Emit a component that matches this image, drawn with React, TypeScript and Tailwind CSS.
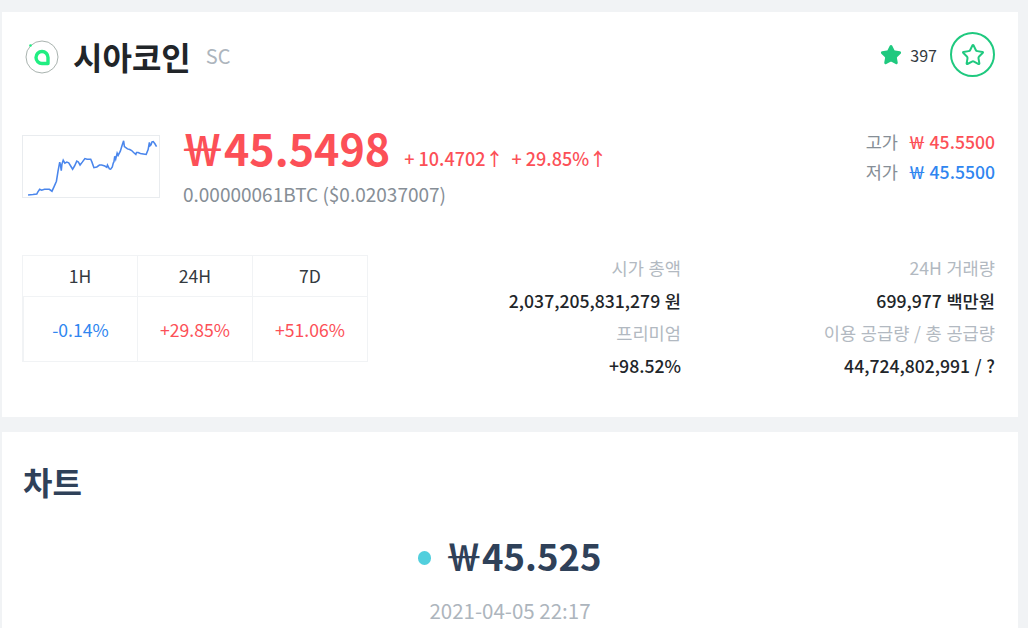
import { Star } from "lucide-react"

const font = { fontFamily: '"Noto Sans CJK KR", "Noto Sans", sans-serif' }

const sparkline =
  "4,61 9,60.5 13,60 14,58 16,55 18,56 21,55 26,55 28.7,57 31,52 33.3,46.7 35,36 36.7,27 37.5,30 38.3,35.7 39,29 40.3,25 42,28 44,27 46,27.7 48,31 50,34.3 52,31 54.3,26 56,27 57.7,30 60,27 62.7,23.3 65,24 68.7,24 70,27 72,32.7 75,32 77.7,30 80,30 83.3,31 85.3,32.3 86,30 88,34 89.3,34.3 91,32 92,28 92.7,26.7 93.5,21 94.5,24 96,17.7 97,20 99.3,15.7 101,10 102.7,5 103.5,11 105,12 106.7,13.3 109,14 111,15 113,17 115.3,19 116,17 117.7,17 120,18 123,18.5 126,19 128,14 129.3,6.7 130,10 131,9 132,6 133.3,5.7 135,8 136.7,11"

const cells = [
  { label: "1H", value: "-0.14%", color: "text-[#2f86f0]" },
  { label: "24H", value: "+29.85%", color: "text-[#fc5057]" },
  { label: "7D", value: "+51.06%", color: "text-[#fc5057]" },
]

function Won() {
  return <span className="[font-feature-settings:'fwid']">₩</span>
}

function Stat({ label, value }: { label: string; value: string }) {
  return (
    <div className="text-right [word-spacing:0.7px]">
      <div className="h-[32.5px] text-[17.6px] leading-[32.5px] text-[#b2b9c1]">{label}</div>
      <div className="h-[32.5px] text-[17.6px] leading-[32.5px] font-medium text-[#212529]">{value}</div>
    </div>
  )
}

function CoinLogo() {
  return (
    <svg viewBox="0 0 34 34" className="h-[34px] w-[34px] shrink-0">
      <circle cx="17" cy="17" r="16" fill="none" stroke="#a9b3af" strokeWidth="1" />
      <circle cx="5.5" cy="5.5" r="1.3" fill="#20ee82" />
      <path
        d="M17 11.5a6 6 0 0 1 6 6v6h-6a6 6 0 0 1 0-12z"
        fill="none"
        stroke="#20ee82"
        strokeWidth="3.4"
        strokeLinejoin="round"
      />
    </svg>
  )
}

export default function App() {
  return (
    <div className="h-[628px] overflow-hidden bg-[#f1f3f5] pt-3 pr-[10px] pl-[2px]" style={font}>
      <div className="h-[405px] bg-white pt-7 pr-[23px] pl-5">
        {/* Title */}
        <div className="flex h-[34px] items-center">
          <div className="ml-[3px]">
            <CoinLogo />
          </div>
          <h1 className="-mt-[2px] ml-[14px] text-[32px] leading-[34px] font-bold text-[#212529]">시아코인</h1>
          <span className="-mt-[2px] ml-[15px] text-[20px] text-[#adb5bd]">SC</span>
          <div className="-mt-[5px] ml-auto flex items-center">
            <Star className="h-[22px] w-[22px] fill-[#1fc97f] text-[#1fc97f]" />
            <span className="ml-[8px] text-[16px] text-[#343a40]">397</span>
            <button className="ml-[13px] flex h-[45px] w-[45px] items-center justify-center rounded-full border-2 border-[#1fc97f]">
              <Star className="h-6 w-6 text-[#1fc97f]" strokeWidth={2} />
            </button>
          </div>
        </div>

        {/* Price */}
        <div className="mt-[61px] flex">
          <svg viewBox="0 0 138 63" className="h-[63px] w-[138px] shrink-0 border border-[#e9ecef]">
            <polyline points={sparkline} fill="none" stroke="#4a86ec" strokeWidth="1.6" />
          </svg>
          <div className="-mt-[11px] ml-[21px]">
            <div className="flex items-baseline">
              <span className="text-[43px] leading-[46px] font-bold text-[#fc5057]">
                <Won />
                45.5498
              </span>
              <span className="ml-[14px] text-[18px] font-medium text-[#fc5057]">+ 10.4702↑</span>
              <span className="ml-[8px] text-[18px] font-medium text-[#fc5057]">+ 29.85%↑</span>
            </div>
            <div className="mt-[8px] ml-[2px] text-[19px] leading-[28px] text-[#868e96]">
              0.00000061BTC ($0.02037007)
            </div>
          </div>
          <div className="-mt-[8px] ml-auto text-[17.6px] leading-[30px]">
            <div className="flex justify-end">
              <span className="text-[#868e96]">고가</span>
              <span className="ml-[10px] font-medium text-[#fc5057]">
                <Won /> 45.5500
              </span>
            </div>
            <div className="flex justify-end">
              <span className="text-[#868e96]">저가</span>
              <span className="ml-[10px] font-medium text-[#2f86f0]">
                <Won /> 45.5500
              </span>
            </div>
          </div>
        </div>

        {/* Stats */}
        <div className="mt-[47px] flex">
          <div className="grid h-[107px] w-[346px] shrink-0 grid-cols-[114px_115px_1fr] grid-rows-[41px_1fr] border border-[#f1f3f5]">
            {cells.map((c) => (
              <div
                key={c.label}
                className="flex items-center justify-center border-b border-l border-[#f1f3f5] pt-[1px] text-[17.6px] text-[#343a40] first:border-l-0"
              >
                {c.label}
              </div>
            ))}
            {cells.map((c) => (
              <div
                key={c.label}
                className={`flex items-center justify-center border-l border-[#f1f3f5] pt-[3px] text-[17.6px] first:border-l-0 ${c.color}`}
              >
                {c.value}
              </div>
            ))}
          </div>
          <div className="-mt-[3px] ml-auto grid w-[630px] grid-cols-2">
            <div className="w-[313px]">
              <Stat label="시가 총액" value="2,037,205,831,279 원" />
              <Stat label="프리미엄" value="+98.52%" />
            </div>
            <div>
              <Stat label="24H 거래량" value="699,977 백만원" />
              <Stat label="이용 공급량 / 총 공급량" value="44,724,802,991 / ?" />
            </div>
          </div>
        </div>
      </div>

      {/* Chart */}
      <div className="mt-[15px] h-[300px] bg-white px-5 pt-[26px]">
        <h2 className="ml-[1px] text-[32px] leading-[46px] font-bold text-[#2f4159]">차트</h2>
        <div className="mt-[29px] flex items-center justify-center">
          <span className="mt-[3px] h-[14px] w-[13px] rounded-full bg-[#52cfdd]" />
          <span className="ml-[14px] text-[36.5px] leading-[46px] font-bold text-[#2f4159]">
            <Won />
            45.525
          </span>
        </div>
        <div className="mt-[16px] text-center text-[20.5px] leading-[30px] text-[#adb5bd]">2021-04-05 22:17</div>
      </div>
    </div>
  )
}
